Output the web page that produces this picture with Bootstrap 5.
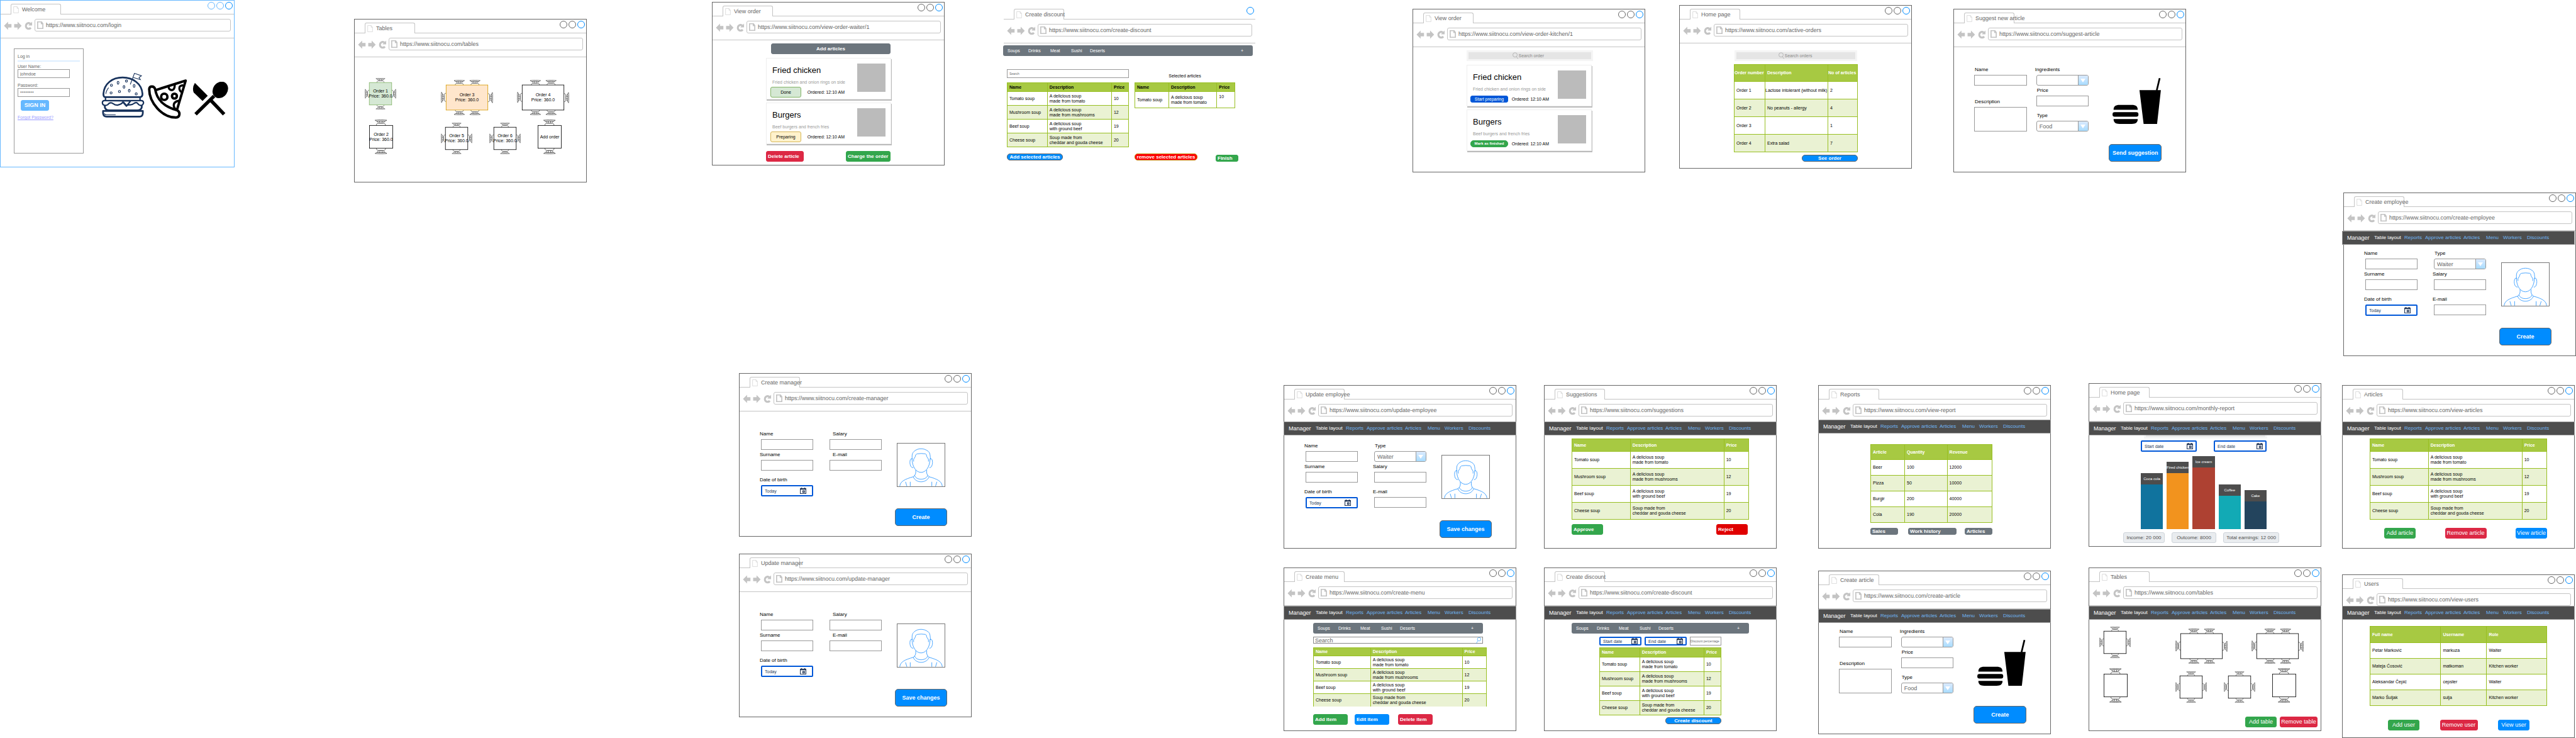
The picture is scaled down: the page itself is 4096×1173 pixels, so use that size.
<!DOCTYPE html>
<html lang="en">
<head>
<meta charset="utf-8">
<meta name="viewport" content="width=device-width, initial-scale=1">
<title>Siitnocu restaurant wireframes</title>
<link href="https://cdn.jsdelivr.net/npm/bootstrap@5.3.0/dist/css/bootstrap.min.css" rel="stylesheet">
<style>
body{font-family:"Liberation Sans",Arial,sans-serif;font-size:7px;line-height:8px;color:#000;background:#fff}
.board{position:relative;min-height:1173px;overflow:hidden}

/* artboards pinned on the free canvas */
.win{position:absolute;left:calc(var(--x) / 4096 * 100%);top:calc(var(--y) * 1px);width:calc(370 / 4096 * 100%);min-height:260px;border:1px solid #666;background:#fff}
.at-login{--x:0;--y:0;width:calc(373 / 4096 * 100%);min-height:266px;border-color:#66b8ff}
.at-tables{--x:563;--y:30}
.at-waiter{--x:1132;--y:3}
.at-discount{--x:1595;--y:8;width:calc(402 / 4096 * 100%);border-color:transparent}
.at-kitchen{--x:2246;--y:14}
.at-active{--x:2670;--y:8}
.at-suggest{--x:3106;--y:14}
.at-employee{--x:3726;--y:306}
.at-manager{--x:1175;--y:593}
.at-manager2{--x:1175;--y:880}
.at-employee2{--x:2041;--y:612}
.at-suggestions{--x:2455;--y:612}
.at-reports{--x:2891;--y:612}
.at-monthly{--x:3321;--y:609}
.at-articles{--x:3724;--y:612}
.at-menu{--x:2041;--y:902}
.at-discount2{--x:2455;--y:902}
.at-article{--x:2891;--y:907}
.at-floor{--x:3321;--y:902}
.at-users{--x:3724;--y:913}

/* browser chrome */
.strip{display:flex;height:22px;border-bottom:1px solid #c4c4c4;padding:5px 2px 0 16px}
.wtab{display:flex;align-items:center;width:80px;height:17px;flex:none;border:1px solid #c4c4c4;border-bottom:0;border-radius:3px 3px 0 0;background:#fff;font-size:9px;line-height:10px;color:#666;white-space:nowrap;padding-left:3px}
.wtab svg{width:9px;height:11px;flex:none;margin-right:5px}
.lights{display:flex;gap:2px;margin:-3px 0 0 auto}
.lights i{width:12px;height:12px;border:1px solid #666;border-radius:50%}
.lights i:last-child{border-color:#008cff}
.at-login .lights i{border-color:#66b8ff}
.at-login .lights i:last-child{border-color:#008cff}
.at-discount .lights i:not(:last-child){border-color:transparent}
.urlrow{display:flex;align-items:flex-start;height:38px;border-bottom:1px solid #c4c4c4;padding:7px 5px 0 5px}
.urlrow>svg{width:46px;height:14px;flex:none;margin:4px 3px 0 0}
.urlbox{display:flex;align-items:center;flex:1;height:20px;border:1px solid #c4c4c4;border-radius:3px;padding-left:3px;background:#fff}
.urlbox svg{width:10px;height:12px;flex:none;margin-right:4px;stroke-width:3}
.urlbox input,.bare{border:0;padding:0;background:transparent;min-width:0;outline:0;color:inherit}
.urlbox input{flex:1;font-size:9px;line-height:12px;height:12px;color:#666}

/* manager menu */
.mnav{position:relative;display:grid;grid-template-columns:43px 48px 33px 61px 36px 27px 38px auto;align-items:center;height:22px;margin:0 -1px;padding-left:7px;background:#4d4d4d;border:1px solid #999;font-size:8px;line-height:10px;white-space:nowrap}
.mnav a{color:#70b5f2;text-decoration:none}
.mnav a:nth-child(-n+2){color:#fff}
.mnav a:first-child{font-size:9px}
.lift3{margin-top:-3px;margin-bottom:3px}
.lift6{margin-top:-6px;margin-bottom:6px}
.lift11{margin-top:-11px;margin-bottom:11px}
.slide{margin-left:-3px;margin-right:1px}

/* buttons */
.btn{--bs-btn-border-width:1px;--bs-btn-padding-x:2px;--bs-btn-padding-y:0;--bs-btn-border-radius:3px;--bs-btn-font-size:8px;--bs-btn-line-height:9px;--bs-btn-font-weight:700;height:17px;display:inline-flex;align-items:center;justify-content:center;white-space:nowrap}
.btn-success{--bs-btn-bg:#33a64c;--bs-btn-border-color:#33a64c}
.btn-danger{--bs-btn-bg:#dc2844;--bs-btn-border-color:#dc2844}
.btn-primary{--bs-btn-bg:#008cff;--bs-btn-border-color:#008cff}
.btn-secondary{--bs-btn-bg:#6c757d;--bs-btn-border-color:#6c757d}
.btn-reject{--bs-btn-color:#fff;--bs-btn-bg:#e00000;--bs-btn-border-color:#e00000}
.btn-drop{--bs-btn-color:#fff;--bs-btn-bg:#f00;--bs-btn-border-color:#c77c00}
.btn-done{--bs-btn-color:#000;--bs-btn-bg:#d5e8d4;--bs-btn-border-color:#82b366}
.btn-prep{--bs-btn-color:#000;--bs-btn-bg:#fff2cc;--bs-btn-border-color:#d6b656}
.btn-start{--bs-btn-color:#fff;--bs-btn-bg:#0057d8;--bs-btn-border-color:#0057d8}
.outlined{--bs-btn-border-color:#666}
.flat{--bs-btn-font-weight:400}
.t6{--bs-btn-font-size:6px}.t7{--bs-btn-font-size:7px}.t9{--bs-btn-font-size:9px}
.slim{height:11px}
.pill{--bs-btn-border-radius:5px}
.lead-in{justify-content:flex-start}
.big{width:100%;height:28px;--bs-btn-font-size:9px;--bs-btn-border-radius:5px}
.w36{width:36px}.w44{width:44px}.w49{width:49px}.w50{width:50px}.w55{width:55px}.w60{width:60px}.w66{width:66px}.w71{width:71px}.w77{width:77px}.w89{width:89px}.w100x{width:100px}

/* forms */
.formrow{display:flex;padding:9px 38px 0 34px}
.fcol{flex:1;min-width:0;display:flex;flex-direction:column}
.fcol+.fcol{margin-left:26px}
.fcol+.fcol+.fcol{margin-left:21px}
.bare-top{padding-top:31px}
.artform{padding-left:32px}
.artform .fcol+.fcol{margin-left:15px}
.artform .fcol+.fcol+.fcol{margin-left:32px}
.fld{display:block;margin-bottom:3px}
.fld>span{display:block;font-size:8px;line-height:10px;padding-bottom:3px;margin-left:-2px}
.fld.in>span{margin-left:1px}
.low{margin-top:7px}
.form-control{height:17px;min-height:0;padding:0 3px;border:1px solid #999;border-radius:0;font-size:9px;line-height:12px;color:#666}
textarea.form-control{height:39px;min-height:0;resize:none}
.selbox{position:relative;display:block}
.selbox select{display:block;width:100%;height:17px;appearance:none;border:1px solid #999;border-radius:3px;background:#fff;font-size:9px;line-height:12px;padding:0 18px 0 4px;color:#666}
.selbox::before{content:"";position:absolute;right:1px;top:1px;bottom:1px;width:16px;border-left:1px solid #999;background:linear-gradient(#dbeaff,#a8dcff);border-radius:0 2px 2px 0;pointer-events:none}
.selbox::after{content:"";position:absolute;right:5px;top:6px;border:4px solid transparent;border-top:6px solid #fff;border-bottom:0;pointer-events:none}
.datebox,.fld>.datebox{display:flex;align-items:center;height:18px;border:2px solid #0057d8;border-radius:2px;color:#253858;background:#fff}
.datebox input{flex:1;font-size:7px;line-height:9px;height:9px}
.datebox svg{width:10px;height:10px;flex:none}
.fld .datebox svg{margin-right:5px}
.portrait{display:block;width:auto;height:70px;margin:19px 3px 34px;border:1px solid #777}
.portrait svg{display:block;width:100%;height:100%}
.snack{display:block;width:77px;height:73px;margin:18px 0 32px 6px}

/* data tables */
.goods{--bs-table-bg:transparent;margin:0;border-collapse:collapse;table-layout:fixed;font-size:7px;line-height:8px;color:#000}
.goods>:not(caption)>*>*{padding:0 0 0 3px;border:1px solid #98bf21;vertical-align:middle;box-shadow:none;white-space:nowrap;color:inherit;background:transparent}
.goods thead tr{background:#a7c942;color:#fff}
.goods tbody tr:nth-child(even){background:#eaf2d3}
.goods tr{height:var(--r,27px)}
.goods thead tr{height:var(--h,19px)}
.goods.ink thead tr{color:#000}
.soups{margin:5px 43px 0;--r:27px;--h:20px}
.wide-a{width:33%}.wide-b{width:53%}
.foot{display:flex;align-items:flex-start}

/* category bar */
.cats{display:grid;grid-template-columns:33px 35px 33px 30px 1fr auto;align-items:center;height:17px;background:#6c757d;border-radius:3px;padding:0 15px 0 7px;font-size:7px;line-height:9px}
.cats a{color:#fff;text-decoration:none}

/* search boxes */
.seek{display:flex;align-items:center;justify-content:center;height:17px;background:#e5e5e5;border:3px solid #f5f5f5;color:#888}
.seek svg{width:9px;height:11px;margin-right:1px}
.seek input{width:46px;font-size:7px;line-height:9px;height:9px}
.seek input::placeholder{color:#888;opacity:1}

/* order cards */
.dish{display:flex;justify-content:space-between;width:199px;height:66px;margin:0 0 5px 85px;border:1px solid #eee;background:#fff;box-shadow:1px 2px 0 #bbb;padding:8px 8px 0 6px}
.dish h2{font-size:13px;line-height:16px;font-weight:400;margin:3px 0 6px 3px}
.dish p{font-size:7px;line-height:9px;color:#999;margin:0 0 3px 3px}
.dish .thumb{width:45px;height:45px;background:#bbb}
.dish .state{display:flex;align-items:center;width:118px;height:17px;white-space:nowrap}
.dish .state span{margin-left:auto}
.at-kitchen .dish .state{width:125px;margin-left:-1px}

/* floor plan */
.floor{position:relative;height:127px;margin-top:8px}
.floor.roomy{margin-top:30px}
.seat{position:absolute;left:calc(var(--x) / 368 * 100%);top:calc(var(--y) * 1px);display:flex;align-items:center;justify-content:center;text-align:center;white-space:nowrap}
.seat svg{position:absolute;left:0;top:0;width:100%;height:100%}
.seat span{position:relative}
.four{width:50px;height:50px}.six{width:83px;height:56px}.two{width:38px;height:55px}
.s1{--x:16;--y:3}.s2{--x:23;--y:69}.s3{--x:137;--y:6}.s4{--x:258;--y:6}.s5{--x:137;--y:74}.s6{--x:214;--y:74}.s7{--x:291;--y:69}
.ready{--tf:#d5e8d4;--ts:#82b366}.waiting{--tf:#ffe6cc;--ts:#d79b00}

/* login */
.loginbox{width:111px;height:167px;border:1px solid #999;padding:8px 5px 0;color:#666}
.loginbox .form-control{width:83px;height:14px;font-size:7px;line-height:9px;color:#666}
.loginbox hr{margin:2px 0 3px;border:0;border-top:2px solid #ddeeff;opacity:1}
.loginbox label{display:block;margin-bottom:7px}
.loginbox label+label{margin-bottom:5px}
.loginbox label span{display:block;line-height:9px}
.signin{--bs-btn-color:#fff;--bs-btn-bg:#66b8ff;--bs-btn-border-color:#66b8ff;width:45px;margin-left:5px}
.loginbox a{color:#9999ff;display:block;margin-top:7px}

/* monthly chart */
.stub{height:6px;margin:-1px 85px 0 87px;background:#e5e5e5;border:3px solid #f5f5f5;border-top:0}
.bars{display:flex;align-items:flex-end;gap:6px;height:116px;margin:7px 86px 0 82px}
.bars div{flex:1;min-width:0}
.bars span{display:flex;justify-content:center;align-items:center;height:18px;background:#4d4d4d;color:#fff;font-size:6px;line-height:7px;white-space:nowrap}
.b1{background:#10739e}.b2{background:#f2931e}.b3{background:#ae4132}.b4{background:#12aab5}.b5{background:#23445d}
.sum{height:17px;display:flex;align-items:center;justify-content:center;border:1px solid #ced4da;border-radius:3px;background:#e9ecef;color:#4d4d4d;font-size:8px;line-height:10px;white-space:nowrap}
</style>
</head>
<body>
<svg width="0" height="0" class="position-absolute" aria-hidden="true">
  <symbol id="doc" viewBox="0 0 16 20"><path d="M1 1H11L15 6V19H1ZM11 1V6H15" fill="none" stroke="#c4c4c4"/></symbol>
  <symbol id="navs" viewBox="0 0 84 26"><path d="M0 13L12 1V8H22V18H12V25ZM52 13ZM30 8H40V1L52 13L40 25V18H30Z" fill="#c4c4c4"/><path d="M79 18.500A8 8.500 0 1 1 78 7" fill="none" stroke="#c4c4c4" stroke-width="6"/><path d="M83 1V12H72Z" fill="#c4c4c4"/></symbol>
  <symbol id="cal" viewBox="0 0 18 18"><path d="M0 2H3V0H6V2H12V0H15V2H18V18H0ZM2 6V16H16V6Z" fill="#253858" fill-rule="evenodd"/><path d="M7 8H14V15H7ZM9.500 10.500V12.500H11.500V10.500Z" fill="#253858" fill-rule="evenodd"/></symbol>
  <symbol id="lens" viewBox="0 0 18 21"><circle cx="8" cy="8" r="7" fill="none" stroke="#888"/><path d="M12.500 13.500L17.500 20.500" stroke="#888"/></symbol>
  <symbol id="face" viewBox="0 0 140 126"><g fill="none" stroke="#1e90ff" stroke-width="1.500">
    <path d="M44 46C42 32 45 27 49 23C56 17 62 15 70 15S84 17 92 23C97 28 97 34 98 46"/>
    <path d="M48 53V46L53 38C53 34 55 31 59 30Q70 28 83 30C86 31 86 34 87 38L92 46V53"/>
    <path d="M43 44C44 70 56 85 70 85S96 70 97 44"/><path d="M44 45C38 43 37 50 37 57C38 65 40 71 47 71M97 45C103 43 104 50 104 57C103 65 101 71 95 71"/>
    <path d="M54 78C55 86 54 90 51 94L47 98C22 105 8 112 7 126M87 78C86 86 87 90 90 94L94 98C119 105 132 112 133 126"/>
    <path d="M51 94C55 109 85 109 90 94M47 98C54 118 86 118 94 98M24 113L28 126M38 113V126M102 113V126M117 113L113 126"/></g></symbol>
  <symbol id="fastfood" viewBox="0 0 140 133"><path d="M3 92C3 82 9 78 20 78H56C67 78 73 82 73 92ZM3 119H73C73 129 67 133 56 133H20C9 133 3 129 3 119ZM78 35H140L129 133H90Z"/><rect x="0" y="99" width="75" height="13" rx="6"/><path d="M136.500 .5L128 36" stroke="#000" stroke-width="5"/></symbol>
  <symbol id="ch" viewBox="0 0 26 13" overflow="visible"><g fill="#fff" stroke="#000" stroke-width=".8"><path d="M3 13V11Q4 8 8 8H18Q22 8 23 11V13"/><path d="M4 3L8 8H18L22 3Z"/><path d="M0 1.500Q13-.5 26 1.500L22 4Q13 2.500 4 4Z"/><path d="M10 3.500L11 8M16 3.500L15 8"/></g></symbol>
  <symbol id="t4" viewBox="0 0 90 90"><use href="#ch" width="26" height="13" transform="translate(32,0)"/><use href="#ch" width="26" height="13" transform="rotate(180 45 45) translate(32,0)"/><use href="#ch" width="26" height="13" transform="rotate(90 45 45) translate(32,0)"/><use href="#ch" width="26" height="13" transform="rotate(-90 45 45) translate(32,0)"/><rect x="13" y="13" width="64" height="64" style="fill:var(--tf,#fff);stroke:var(--ts,#000)" stroke-width="1.500"/></symbol>
  <symbol id="t6" viewBox="0 0 150 101"><use href="#ch" width="26" height="13" transform="translate(38,0) scale(1.150)"/><use href="#ch" width="26" height="13" transform="translate(83,0) scale(1.150)"/><use href="#ch" width="26" height="13" transform="translate(68,101) rotate(180) scale(1.150)"/><use href="#ch" width="26" height="13" transform="translate(113,101) rotate(180) scale(1.150)"/><use href="#ch" width="26" height="13" transform="translate(0,65) rotate(-90) scale(1.150)"/><use href="#ch" width="26" height="13" transform="translate(150,36) rotate(90) scale(1.150)"/><rect x="15" y="14.500" width="120" height="72" style="fill:var(--tf,#fff);stroke:var(--ts,#000)" stroke-width="1.500"/></symbol>
  <symbol id="t2" viewBox="0 0 69 100"><use href="#ch" width="26" height="13" transform="translate(17,0) scale(1.300)"/><use href="#ch" width="26" height="13" transform="translate(51,100) rotate(180) scale(1.300)"/><rect x="1" y="17" width="67" height="66" style="fill:var(--tf,#fff);stroke:var(--ts,#000)" stroke-width="1.500"/></symbol>
</svg>

<main class="board">

<!-- Welcome -->
<article class="win at-login">
  <header class="strip"><div class="wtab"><svg><use href="#doc"/></svg>Welcome</div><div class="lights"><i></i><i></i><i></i></div></header>
  <div class="urlrow"><svg><use href="#navs"/></svg><div class="urlbox"><svg><use href="#doc"/></svg><input aria-label="Address" value="https://www.siitnocu.com/login"></div></div>
  <div class="d-flex" style="padding:16px 0 0 21px">
    <form class="loginbox">
      <div>Log in</div><hr>
      <label><span>User Name:</span><input class="form-control" value="johndoe"></label>
      <label><span>Password:</span><input class="form-control" value="********"></label>
      <button type="button" class="btn signin t9">SIGN IN</button>
      <a href="#">Forgot Password?</a>
    </form>
    <svg width="69" height="71" viewBox="0 0 124 128" style="margin:39px 5px 0 28px"><g fill="none" stroke="#17325c" stroke-width="5" stroke-linejoin="round">
      <path d="M10 69Q6 68 6 60C8 30 32 13 61 13S116 30 118 60Q118 68 112 69Z"/><path d="M12 70V79M111 70V79" stroke-width="4"/>
      <path d="M9 79H114Q121 79 121 86Q119 93 113 93Q108 93 104 87Q100 83 94 87Q88 92 80 91L72 93L60 80M84 80L72 95L62 84Q56 91 46 92Q38 92 34 88Q28 83 22 87Q18 93 12 93Q4 93 3 86Q3 79 9 79Z" stroke-width="4"/>
      <path d="M10 93C9 100 12 107 22 107H104C114 107 117 100 116 93"/><path d="M5 109H119V115Q118 125 110 125H15Q6 125 5 115Z"/></g>
      <g fill="none" stroke="#17325c" stroke-width="2"><path d="M9 116Q10 120 15 120H41M13 60Q14 50 21 42M83 33L95 1L115 8L108 13L112 19L92 13"/>
      <g><ellipse cx="29" cy="35" rx="3" ry="3"/><ellipse cx="48" cy="28" rx="2.500" ry="4"/><ellipse cx="72" cy="23" rx="3" ry="3"/><ellipse cx="65" cy="40" rx="2.500" ry="4"/><ellipse cx="94" cy="37" rx="2.500" ry="4"/><ellipse cx="28" cy="57" rx="3" ry="3"/><ellipse cx="52" cy="53" rx="3" ry="3"/><ellipse cx="80" cy="51" rx="2.500" ry="4"/><ellipse cx="100" cy="60" rx="3" ry="3"/></g></g></svg>
    <svg width="63" height="63" viewBox="0 0 113 113" style="margin-top:49px"><g fill="none" stroke="#000" stroke-width="7" stroke-linejoin="round"><path d="M4 28C4 66 40 109 80 109C93 108 93 93 83 88C50 80 26 60 21 28C18 18 5 18 4 28Z"/><path d="M22 31L108 4L83 88"/><circle cx="47" cy="50" r="9"/><circle cx="76" cy="48" r="7"/><path d="M59 20Q60 31 69 31Q77 30 77 15M101 17Q88 18 90 27Q92 36 98 36M89 61Q73 64 74 76Q76 84 82 88" stroke-width="6"/></g></svg>
    <svg width="57" height="54" viewBox="0 0 103 97" style="margin:53px 0 0 8px"><path d="M7 3L44 40L29 55L4 31Q-2 18 7 3Z"/><path d="M62 41L9 93M50 50L91 93" stroke="#000" stroke-width="10"/><ellipse cx="80" cy="23" rx="21" ry="25" transform="rotate(35 80 23)"/></svg>
  </div>
</article>

<!-- Tables, waiter -->
<article class="win at-tables">
  <header class="strip"><div class="wtab"><svg><use href="#doc"/></svg>Tables</div><div class="lights"><i></i><i></i><i></i></div></header>
  <div class="urlrow"><svg><use href="#navs"/></svg><div class="urlbox"><svg><use href="#doc"/></svg><input aria-label="Address" value="https://www.siitnocu.com/tables"></div></div>
  <div class="floor roomy">
    <div class="seat four s1 ready"><svg><use href="#t4"/></svg><span>Order 1<br>Price: 360.0</span></div>
    <div class="seat two s2"><svg><use href="#t2"/></svg><span>Order 2<br>Price: 360.0</span></div>
    <div class="seat six s3 waiting"><svg><use href="#t6"/></svg><span>Order 3<br>Price: 360.0</span></div>
    <div class="seat six s4"><svg><use href="#t6"/></svg><span>Order 4<br>Price: 360.0</span></div>
    <div class="seat four s5"><svg><use href="#t4"/></svg><span>Order 5<br>Price: 360.0</span></div>
    <div class="seat four s6"><svg><use href="#t4"/></svg><span>Order 6<br>Price: 360.0</span></div>
    <div class="seat two s7"><svg><use href="#t2"/></svg><span>Add order</span></div>
  </div>
</article>

<!-- View order, waiter -->
<article class="win at-waiter">
  <header class="strip"><div class="wtab"><svg><use href="#doc"/></svg>View order</div><div class="lights"><i></i><i></i><i></i></div></header>
  <div class="urlrow"><svg><use href="#navs"/></svg><div class="urlbox"><svg><use href="#doc"/></svg><input aria-label="Address" value="https://www.siitnocu.com/view-order-waiter/1"></div></div>
  <div style="padding:5px 85px 6px 93px"><button class="btn btn-secondary w-100">Add articles</button></div>
  <div class="dish"><div><h2>Fried chicken</h2><p>Fried chicken and onion rings on side</p><div class="state"><button class="btn btn-done flat t7 w49">Done</button><span>Ordered: 12:10 AM</span></div></div><div class="thumb"></div></div>
  <div class="dish"><div><h2>Burgers</h2><p>Beef burgers and french fries</p><div class="state"><button class="btn btn-prep flat t7 w49">Preparing</button><span>Ordered: 12:10 AM</span></div></div><div class="thumb"></div></div>
  <div class="foot justify-content-between" style="padding:6px 85px 0"><button class="btn btn-danger lead-in w60">Delete article</button><button class="btn btn-success lead-in w71">Charge the order</button></div>
</article>

<!-- Create discount, waiter -->
<article class="win at-discount">
  <header class="strip"><div class="wtab"><svg><use href="#doc"/></svg>Create discount</div><div class="lights"><i></i><i></i><i></i></div></header>
  <div class="urlrow"><svg><use href="#navs"/></svg><div class="urlbox"><svg><use href="#doc"/></svg><input aria-label="Address" value="https://www.siitnocu.com/create-discount"></div></div>
  <nav class="cats" style="margin:3px 4px 0 -1px"><a href="#">Soups</a><a href="#">Drinks</a><a href="#">Meat</a><a href="#">Sushi</a><a href="#">Deserts</a><a href="#">+</a></nav>
  <div class="d-flex" style="padding:21px 32px 0 5px">
    <div style="width:194px">
      <input class="form-control" style="height:14px;font-size:5px" aria-label="Search" placeholder="Search">
      <table class="table goods ink" style="--h:14px;--r:22px;margin-top:7px"><colgroup><col class="wide-a"><col class="wide-b"><col></colgroup>
        <thead><tr><th>Name</th><th>Description</th><th>Price</th></tr></thead>
        <tbody><tr><td>Tomato soup</td><td>A delicious soup<br>made from tomato</td><td>10</td></tr><tr><td>Mushroom soup</td><td>A delicious soup<br>made from mushrooms</td><td>12</td></tr><tr><td>Beef soup</td><td>A delicious soup<br>with ground beef</td><td>19</td></tr><tr><td>Cheese soup</td><td>Soup made from<br>cheddar and gouda cheese</td><td>20</td></tr></tbody></table>
    </div>
    <div style="width:160px;margin-left:9px">
      <div class="text-center" style="padding:7px 0 6px">Selected articles</div>
      <table class="table goods ink" style="--h:14px;--r:26px"><colgroup><col style="width:34%"><col style="width:48%"><col></colgroup>
        <thead><tr><th>Name</th><th>Description</th><th>Price</th></tr></thead>
        <tbody><tr><td>Tomato soup</td><td>A delicious soup<br>made from tomato</td><td class="align-top pt-1">10</td></tr></tbody></table>
    </div>
  </div>
  <div class="foot" style="padding:10px 27px 0 5px"><button class="btn btn-primary outlined pill slim w89">Add selected articles</button><button class="btn btn-drop pill slim w100x" style="margin-left:114px">remove selected articles</button><button class="btn btn-success slim lead-in w36 ms-auto" style="margin-top:2px">Finish</button></div>
</article>

<!-- View order, kitchen -->
<article class="win at-kitchen">
  <header class="strip"><div class="wtab"><svg><use href="#doc"/></svg>View order</div><div class="lights"><i></i><i></i><i></i></div></header>
  <div class="urlrow"><svg><use href="#navs"/></svg><div class="urlbox"><svg><use href="#doc"/></svg><input aria-label="Address" value="https://www.siitnocu.com/view-order-kitchen/1"></div></div>
  <label class="seek" style="margin:5px 82px 6px 85px"><svg><use href="#lens"/></svg><input class="bare" aria-label="Search order" placeholder="Search order"></label>
  <div class="dish"><div><h2>Fried chicken</h2><p>Fried chicken and onion rings on side</p><div class="state"><button class="btn btn-start flat t7 slim w60">Start preparing</button><span>Ordered: 12:10 AM</span></div></div><div class="thumb"></div></div>
  <div class="dish"><div><h2>Burgers</h2><p>Beef burgers and french fries</p><div class="state"><button class="btn btn-success t6 slim pill w60">Mark as finished</button><span>Ordered: 12:10 AM</span></div></div><div class="thumb"></div></div>
</article>

<!-- Active orders -->
<article class="win at-active">
  <header class="strip"><div class="wtab"><svg><use href="#doc"/></svg>Home page</div><div class="lights"><i></i><i></i><i></i></div></header>
  <div class="urlrow"><svg><use href="#navs"/></svg><div class="urlbox"><svg><use href="#doc"/></svg><input aria-label="Address" value="https://www.siitnocu.com/active-orders"></div></div>
  <label class="seek" style="margin:11px 86px 5px 87px"><svg><use href="#lens"/></svg><input class="bare" aria-label="Search orders" placeholder="Search orders"></label>
  <div style="padding:0 85px 0 86px">
    <table class="table goods" style="--h:27px;--r:28px"><colgroup><col style="width:25%"><col style="width:51%"><col></colgroup>
      <thead><tr><th class="ps-0">Order number</th><th>Description</th><th class="ps-0">No of articles</th></tr></thead>
      <tbody><tr><td>Order 1</td><td class="ps-0">Lactose intolerant (without milk)</td><td>2</td></tr><tr><td>Order 2</td><td>No peanuts - allergy</td><td>4</td></tr><tr><td>Order 3</td><td></td><td>1</td></tr><tr><td>Order 4</td><td>Extra salad</td><td>7</td></tr></tbody></table>
    <div class="d-flex justify-content-end" style="padding-top:4px"><button class="btn btn-primary outlined pill slim w89">See order</button></div>
  </div>
</article>

<!-- Suggest new article -->
<article class="win at-suggest">
  <header class="strip"><div class="wtab"><svg><use href="#doc"/></svg>Suggest new article</div><div class="lights"><i></i><i></i><i></i></div></header>
  <div class="urlrow"><svg><use href="#navs"/></svg><div class="urlbox"><svg><use href="#doc"/></svg><input aria-label="Address" value="https://www.siitnocu.com/suggest-article"></div></div>
  <form class="formrow artform bare-top">
    <div class="fcol"><label class="fld in"><span>Name</span><input class="form-control"></label><label class="fld in" style="margin-top:18px"><span>Description</span><textarea class="form-control"></textarea></label></div>
    <div class="fcol"><label class="fld"><span>Ingredients</span><span class="selbox p-0 m-0"><select><option></option></select></span></label><label class="fld in"><span>Price</span><input class="form-control"></label><label class="fld in low"><span>Type</span><span class="selbox p-0 m-0"><select><option>Food</option></select></span></label></div>
    <div class="fcol"><svg class="snack"><use href="#fastfood"/></svg><button type="button" class="btn btn-primary outlined big">Send suggestion</button></div>
  </form>
</article>

<!-- Create employee -->
<article class="win at-employee">
  <header class="strip"><div class="wtab"><svg><use href="#doc"/></svg>Create employee</div><div class="lights"><i></i><i></i><i></i></div></header>
  <div class="urlrow"><svg><use href="#navs"/></svg><div class="urlbox"><svg><use href="#doc"/></svg><input aria-label="Address" value="https://www.siitnocu.com/create-employee"></div></div>
  <nav class="mnav slide"><a href="#">Manager</a><a href="#">Table layout</a><a href="#">Reports</a><a href="#">Approve articles</a><a href="#">Articles</a><a href="#">Menu</a><a href="#">Workers</a><a href="#">Discounts</a></nav>
  <form class="formrow">
    <div class="fcol"><label class="fld"><span>Name</span><input class="form-control"></label><label class="fld"><span>Surname</span><input class="form-control"></label><label class="fld low"><span>Date of birth</span><span class="datebox m-0 p-0 px-1"><input class="bare" value="Today"><svg><use href="#cal"/></svg></span></label></div>
    <div class="fcol"><label class="fld in"><span>Type</span><span class="selbox p-0 m-0"><select><option>Waiter</option></select></span></label><label class="fld"><span>Salary</span><input class="form-control"></label><label class="fld low"><span>E-mail</span><input class="form-control"></label></div>
    <div class="fcol"><div class="portrait"><svg preserveAspectRatio="none"><use href="#face"/></svg></div><button type="button" class="btn btn-primary outlined big">Create</button></div>
  </form>
</article>

<!-- Create manager -->
<article class="win at-manager">
  <header class="strip"><div class="wtab"><svg><use href="#doc"/></svg>Create manager</div><div class="lights"><i></i><i></i><i></i></div></header>
  <div class="urlrow"><svg><use href="#navs"/></svg><div class="urlbox"><svg><use href="#doc"/></svg><input aria-label="Address" value="https://www.siitnocu.com/create-manager"></div></div>
  <form class="formrow bare-top">
    <div class="fcol"><label class="fld"><span>Name</span><input class="form-control"></label><label class="fld"><span>Surname</span><input class="form-control"></label><label class="fld low"><span>Date of birth</span><span class="datebox m-0 p-0 px-1"><input class="bare" value="Today"><svg><use href="#cal"/></svg></span></label></div>
    <div class="fcol"><label class="fld in"><span class="ps-1">Salary</span><input class="form-control"></label><label class="fld in"><span class="ps-1">E-mail</span><input class="form-control"></label></div>
    <div class="fcol"><div class="portrait"><svg><use href="#face"/></svg></div><button type="button" class="btn btn-primary outlined big">Create</button></div>
  </form>
</article>

<!-- Update manager -->
<article class="win at-manager2">
  <header class="strip"><div class="wtab"><svg><use href="#doc"/></svg>Update manager</div><div class="lights"><i></i><i></i><i></i></div></header>
  <div class="urlrow"><svg><use href="#navs"/></svg><div class="urlbox"><svg><use href="#doc"/></svg><input aria-label="Address" value="https://www.siitnocu.com/update-manager"></div></div>
  <form class="formrow bare-top">
    <div class="fcol"><label class="fld"><span>Name</span><input class="form-control"></label><label class="fld"><span>Surname</span><input class="form-control"></label><label class="fld low"><span>Date of birth</span><span class="datebox m-0 p-0 px-1"><input class="bare" value="Today"><svg><use href="#cal"/></svg></span></label></div>
    <div class="fcol"><label class="fld in"><span class="ps-1">Salary</span><input class="form-control"></label><label class="fld in"><span class="ps-1">E-mail</span><input class="form-control"></label></div>
    <div class="fcol"><div class="portrait"><svg><use href="#face"/></svg></div><button type="button" class="btn btn-primary outlined big">Save changes</button></div>
  </form>
</article>

<!-- Update employee -->
<article class="win at-employee2">
  <header class="strip"><div class="wtab"><svg><use href="#doc"/></svg>Update employee</div><div class="lights"><i></i><i></i><i></i></div></header>
  <div class="urlrow"><svg><use href="#navs"/></svg><div class="urlbox"><svg><use href="#doc"/></svg><input aria-label="Address" value="https://www.siitnocu.com/update-employee"></div></div>
  <nav class="mnav lift3"><a href="#">Manager</a><a href="#">Table layout</a><a href="#">Reports</a><a href="#">Approve articles</a><a href="#">Articles</a><a href="#">Menu</a><a href="#">Workers</a><a href="#">Discounts</a></nav>
  <form class="formrow">
    <div class="fcol"><label class="fld"><span>Name</span><input class="form-control"></label><label class="fld"><span>Surname</span><input class="form-control"></label><label class="fld low"><span>Date of birth</span><span class="datebox m-0 p-0 px-1"><input class="bare" value="Today"><svg><use href="#cal"/></svg></span></label></div>
    <div class="fcol"><label class="fld in"><span>Type</span><span class="selbox p-0 m-0"><select><option>Waiter</option></select></span></label><label class="fld"><span>Salary</span><input class="form-control"></label><label class="fld low"><span>E-mail</span><input class="form-control"></label></div>
    <div class="fcol"><div class="portrait"><svg preserveAspectRatio="none"><use href="#face"/></svg></div><button type="button" class="btn btn-primary outlined big">Save changes</button></div>
  </form>
</article>

<!-- Suggestions -->
<article class="win at-suggestions">
  <header class="strip"><div class="wtab"><svg><use href="#doc"/></svg>Suggestions</div><div class="lights"><i></i><i></i><i></i></div></header>
  <div class="urlrow"><svg><use href="#navs"/></svg><div class="urlbox"><svg><use href="#doc"/></svg><input aria-label="Address" value="https://www.siitnocu.com/suggestions"></div></div>
  <nav class="mnav lift3"><a href="#">Manager</a><a href="#">Table layout</a><a href="#">Reports</a><a href="#">Approve articles</a><a href="#">Articles</a><a href="#">Menu</a><a href="#">Workers</a><a href="#">Discounts</a></nav>
  <div class="soups"><table class="table goods"><colgroup><col class="wide-a"><col class="wide-b"><col></colgroup>
    <thead><tr><th>Name</th><th>Description</th><th>Price</th></tr></thead>
    <tbody><tr><td>Tomato soup</td><td>A delicious soup<br>made from tomato</td><td>10</td></tr><tr><td>Mushroom soup</td><td>A delicious soup<br>made from mushrooms</td><td>12</td></tr><tr><td>Beef soup</td><td>A delicious soup<br>with ground beef</td><td>19</td></tr><tr><td>Cheese soup</td><td>Soup made from<br>cheddar and gouda cheese</td><td>20</td></tr></tbody></table></div>
  <div class="foot justify-content-between" style="padding:7px 45px 0 43px"><button class="btn btn-success lead-in w50">Approve</button><button class="btn btn-reject lead-in w50">Reject</button></div>
</article>

<!-- Reports -->
<article class="win at-reports">
  <header class="strip"><div class="wtab"><svg><use href="#doc"/></svg>Reports</div><div class="lights"><i></i><i></i><i></i></div></header>
  <div class="urlrow"><svg><use href="#navs"/></svg><div class="urlbox"><svg><use href="#doc"/></svg><input aria-label="Address" value="https://www.siitnocu.com/view-report"></div></div>
  <nav class="mnav lift6"><a href="#">Manager</a><a href="#">Table layout</a><a href="#">Reports</a><a href="#">Approve articles</a><a href="#">Articles</a><a href="#">Menu</a><a href="#">Workers</a><a href="#">Discounts</a></nav>
  <div style="padding:11px 92px 0 82px">
    <table class="table goods" style="--h:24px;--r:25px"><colgroup><col style="width:28%"><col style="width:35%"><col></colgroup>
      <thead><tr><th>Article</th><th>Quantity</th><th>Revenue</th></tr></thead>
      <tbody><tr><td>Beer</td><td>100</td><td>12000</td></tr><tr><td>Pizza</td><td>50</td><td>10000</td></tr><tr><td>Burgir</td><td>200</td><td>40000</td></tr><tr><td>Cola</td><td>190</td><td>20000</td></tr></tbody></table>
    <div class="foot" style="padding-top:8px"><button class="btn btn-secondary slim lead-in w44">Sales</button><button class="btn btn-secondary slim lead-in w77 ms-3">Work history</button><button class="btn btn-secondary slim lead-in w44 ms-auto">Articles</button></div>
  </div>
</article>

<!-- Monthly report -->
<article class="win at-monthly">
  <header class="strip"><div class="wtab"><svg><use href="#doc"/></svg>Home page</div><div class="lights"><i></i><i></i><i></i></div></header>
  <div class="urlrow"><svg><use href="#navs"/></svg><div class="urlbox"><svg><use href="#doc"/></svg><input aria-label="Address" value="https://www.siitnocu.com/monthly-report"></div></div>
  <nav class="mnav"><a href="#">Manager</a><a href="#">Table layout</a><a href="#">Reports</a><a href="#">Approve articles</a><a href="#">Articles</a><a href="#">Menu</a><a href="#">Workers</a><a href="#">Discounts</a></nav>
  <div class="stub"></div>
  <div class="d-flex justify-content-between" style="padding:3px 86px 0 82px"><div class="datebox m-0 px-1" style="width:89px"><input class="bare" aria-label="Start date" value="Start date"><svg><use href="#cal"/></svg></div><div class="datebox m-0 px-1" style="width:84px"><input class="bare" aria-label="End date" value="End date"><svg><use href="#cal"/></svg></div></div>
  <div class="bars"><div class="b1" style="height:89px"><span>Coca cola</span></div><div class="b2" style="height:107px"><span>Fired chicken</span></div><div class="b3" style="height:116px"><span>Ice cream</span></div><div class="b4" style="height:71px"><span>Coffee</span></div><div class="b5" style="height:62px"><span>Cake</span></div></div>
  <div class="d-flex" style="gap:11px;padding:5px 0 0 54px"><div class="sum w66">Income: 20 000</div><div class="sum w71">Outcome: 8000</div><div class="sum w89">Total earnings: 12 000</div></div>
</article>

<!-- Articles -->
<article class="win at-articles">
  <header class="strip"><div class="wtab"><svg><use href="#doc"/></svg>Articles</div><div class="lights"><i></i><i></i><i></i></div></header>
  <div class="urlrow"><svg><use href="#navs"/></svg><div class="urlbox"><svg><use href="#doc"/></svg><input aria-label="Address" value="https://www.siitnocu.com/view-articles"></div></div>
  <nav class="mnav lift3"><a href="#">Manager</a><a href="#">Table layout</a><a href="#">Reports</a><a href="#">Approve articles</a><a href="#">Articles</a><a href="#">Menu</a><a href="#">Workers</a><a href="#">Discounts</a></nav>
  <div class="soups"><table class="table goods"><colgroup><col class="wide-a"><col class="wide-b"><col></colgroup>
    <thead><tr><th>Name</th><th>Description</th><th>Price</th></tr></thead>
    <tbody><tr><td>Tomato soup</td><td>A delicious soup<br>made from tomato</td><td>10</td></tr><tr><td>Mushroom soup</td><td>A delicious soup<br>made from mushrooms</td><td>12</td></tr><tr><td>Beef soup</td><td>A delicious soup<br>with ground beef</td><td>19</td></tr><tr><td>Cheese soup</td><td>Soup made from<br>cheddar and gouda cheese</td><td>20</td></tr></tbody></table></div>
  <div class="foot justify-content-between" style="padding:13px 43px 0 66px"><button class="btn btn-success flat t9 w50">Add article</button><button class="btn btn-danger flat t9 w66">Remove article</button><button class="btn btn-primary flat t9 w50">View article</button></div>
</article>

<!-- Create menu -->
<article class="win at-menu">
  <header class="strip"><div class="wtab"><svg><use href="#doc"/></svg>Create menu</div><div class="lights"><i></i><i></i><i></i></div></header>
  <div class="urlrow"><svg><use href="#navs"/></svg><div class="urlbox"><svg><use href="#doc"/></svg><input aria-label="Address" value="https://www.siitnocu.com/create-menu"></div></div>
  <nav class="mnav"><a href="#">Manager</a><a href="#">Table layout</a><a href="#">Reports</a><a href="#">Approve articles</a><a href="#">Articles</a><a href="#">Menu</a><a href="#">Workers</a><a href="#">Discounts</a></nav>
  <div style="padding:5px 46px 0">
    <nav class="cats" style="margin-right:6px"><a href="#">Soups</a><a href="#">Drinks</a><a href="#">Meat</a><a href="#">Sushi</a><a href="#">Deserts</a><a href="#">+</a></nav>
    <div class="d-flex align-items-center" style="height:11px;border:1px solid #888;margin:5px 6px 6px 0;padding:0 2px;color:#666"><input class="bare flex-fill" style="font-size:9px;height:9px;line-height:9px" aria-label="Search menu" value="Search"><svg width="8" height="10" viewBox="0 0 14 18"><path d="M5 10L.5 17.500" stroke="#008cff"/><ellipse cx="8.500" cy="5.500" rx="5" ry="5" fill="none" stroke="#008cff"/></svg></div>
    <table class="table goods" style="--h:13px;--r:20px"><colgroup><col class="wide-a"><col class="wide-b"><col></colgroup>
    <thead><tr><th>Name</th><th>Description</th><th>Price</th></tr></thead>
    <tbody><tr><td>Tomato soup</td><td>A delicious soup<br>made from tomato</td><td>10</td></tr><tr><td>Mushroom soup</td><td>A delicious soup<br>made from mushrooms</td><td>12</td></tr><tr><td>Beef soup</td><td>A delicious soup<br>with ground beef</td><td>19</td></tr><tr><td class="border-bottom-0">Cheese soup</td><td class="border-bottom-0">Soup made from<br>cheddar and gouda cheese</td><td class="border-bottom-0">20</td></tr></tbody></table>
    <div class="foot" style="padding-top:12px"><button class="btn btn-success lead-in w55">Add item</button><button class="btn btn-primary lead-in w55" style="margin:0 14px 0 11px">Edit item</button><button class="btn btn-danger lead-in w55">Delete item</button></div>
  </div>
</article>

<!-- Create discount, manager -->
<article class="win at-discount2">
  <header class="strip"><div class="wtab"><svg><use href="#doc"/></svg>Create discount</div><div class="lights"><i></i><i></i><i></i></div></header>
  <div class="urlrow"><svg><use href="#navs"/></svg><div class="urlbox"><svg><use href="#doc"/></svg><input aria-label="Address" value="https://www.siitnocu.com/create-discount"></div></div>
  <nav class="mnav"><a href="#">Manager</a><a href="#">Table layout</a><a href="#">Reports</a><a href="#">Approve articles</a><a href="#">Articles</a><a href="#">Menu</a><a href="#">Workers</a><a href="#">Discounts</a></nav>
  <nav class="cats" style="margin:5px 43px"><a href="#">Soups</a><a href="#">Drinks</a><a href="#">Meat</a><a href="#">Sushi</a><a href="#">Deserts</a><a href="#">+</a></nav>
  <div style="padding:0 87px">
    <div class="d-flex" style="gap:5px;margin-bottom:3px"><div class="datebox m-0 px-1" style="width:67px;height:14px"><input class="bare" aria-label="Start date" value="Start date"><svg><use href="#cal"/></svg></div><div class="datebox m-0 px-1" style="width:67px;height:14px"><input class="bare" aria-label="End date" value="End date"><svg><use href="#cal"/></svg></div><input class="form-control flex-fill px-0" style="width:50px;height:14px;font-size:5px" aria-label="Discount percentage" placeholder="Discount percentage"></div>
    <table class="table goods" style="--h:15px;--r:23px"><colgroup><col class="wide-a"><col class="wide-b"><col></colgroup>
    <thead><tr><th>Name</th><th>Description</th><th>Price</th></tr></thead>
    <tbody><tr><td>Tomato soup</td><td>A delicious soup<br>made from tomato</td><td>10</td></tr><tr><td>Mushroom soup</td><td>A delicious soup<br>made from mushrooms</td><td>12</td></tr><tr><td>Beef soup</td><td>A delicious soup<br>with ground beef</td><td>19</td></tr><tr><td>Cheese soup</td><td>Soup made from<br>cheddar and gouda cheese</td><td>20</td></tr></tbody></table>
    <div class="d-flex justify-content-end" style="padding-top:3px"><button class="btn btn-primary outlined pill slim w89">Create discount</button></div>
  </div>
</article>

<!-- Create article -->
<article class="win at-article">
  <header class="strip"><div class="wtab"><svg><use href="#doc"/></svg>Create article</div><div class="lights"><i></i><i></i><i></i></div></header>
  <div class="urlrow"><svg><use href="#navs"/></svg><div class="urlbox"><svg><use href="#doc"/></svg><input aria-label="Address" value="https://www.siitnocu.com/create-article"></div></div>
  <nav class="mnav"><a href="#">Manager</a><a href="#">Table layout</a><a href="#">Reports</a><a href="#">Approve articles</a><a href="#">Articles</a><a href="#">Menu</a><a href="#">Workers</a><a href="#">Discounts</a></nav>
  <form class="formrow artform">
    <div class="fcol"><label class="fld in"><span>Name</span><input class="form-control"></label><label class="fld in" style="margin-top:18px"><span>Description</span><textarea class="form-control"></textarea></label></div>
    <div class="fcol"><label class="fld"><span>Ingredients</span><span class="selbox p-0 m-0"><select><option></option></select></span></label><label class="fld in"><span>Price</span><input class="form-control"></label><label class="fld in low"><span>Type</span><span class="selbox p-0 m-0"><select><option>Food</option></select></span></label></div>
    <div class="fcol"><svg class="snack"><use href="#fastfood"/></svg><button type="button" class="btn btn-primary outlined big">Create</button></div>
  </form>
</article>

<!-- Table layout, manager -->
<article class="win at-floor">
  <header class="strip"><div class="wtab"><svg><use href="#doc"/></svg>Tables</div><div class="lights"><i></i><i></i><i></i></div></header>
  <div class="urlrow"><svg><use href="#navs"/></svg><div class="urlbox"><svg><use href="#doc"/></svg><input aria-label="Address" value="https://www.siitnocu.com/tables"></div></div>
  <nav class="mnav"><a href="#">Manager</a><a href="#">Table layout</a><a href="#">Reports</a><a href="#">Approve articles</a><a href="#">Articles</a><a href="#">Menu</a><a href="#">Workers</a><a href="#">Discounts</a></nav>
  <div class="floor">
    <div class="seat four s1"><svg><use href="#t4"/></svg></div>
    <div class="seat two s2"><svg><use href="#t2"/></svg></div>
    <div class="seat six s3"><svg><use href="#t6"/></svg></div>
    <div class="seat six s4"><svg><use href="#t6"/></svg></div>
    <div class="seat four s5"><svg><use href="#t4"/></svg></div>
    <div class="seat four s6"><svg><use href="#t4"/></svg></div>
    <div class="seat two s7"><svg><use href="#t2"/></svg></div>
  </div>
  <div class="foot justify-content-end" style="gap:5px;padding:19px 5px 0 0"><button class="btn btn-success flat t9 w50">Add table</button><button class="btn btn-danger flat t9 w60">Remove table</button></div>
</article>

<!-- Users -->
<article class="win at-users">
  <header class="strip"><div class="wtab"><svg><use href="#doc"/></svg>Users</div><div class="lights"><i></i><i></i><i></i></div></header>
  <div class="urlrow"><svg><use href="#navs"/></svg><div class="urlbox"><svg><use href="#doc"/></svg><input aria-label="Address" value="https://www.siitnocu.com/view-users"></div></div>
  <nav class="mnav lift11"><a href="#">Manager</a><a href="#">Table layout</a><a href="#">Reports</a><a href="#">Approve articles</a><a href="#">Articles</a><a href="#">Menu</a><a href="#">Workers</a><a href="#">Discounts</a></nav>
  <div style="margin:-1px 43px 0"><table class="table goods" style="--h:26px;--r:25px"><colgroup><col style="width:40%"><col style="width:26%"><col></colgroup>
    <thead><tr><th>Full name</th><th>Username</th><th>Role</th></tr></thead>
    <tbody><tr><td>Petar Marković</td><td>markuza</td><td>Waiter</td></tr><tr><td>Mateja Ćosović</td><td>matkoman</td><td>Kitchen worker</td></tr><tr><td>Aleksandar Čepić</td><td>cepster</td><td>Waiter</td></tr><tr><td>Marko Šuljak</td><td>sulja</td><td>Kitchen worker</td></tr></tbody></table></div>
  <div class="foot justify-content-between" style="padding:22px 71px 0 72px"><button class="btn btn-success flat t9 w50">Add user</button><button class="btn btn-danger flat t9 w60">Remove user</button><button class="btn btn-primary flat t9 w50">View user</button></div>
</article>

</main>
<script src="https://cdn.jsdelivr.net/npm/bootstrap@5.3.0/dist/js/bootstrap.bundle.min.js"></script>
</body>
</html>
